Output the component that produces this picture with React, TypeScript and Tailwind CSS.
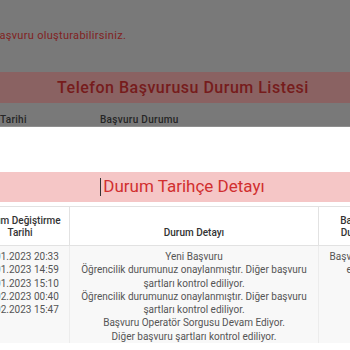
const dates = [
  '20.01.2023 20:33',
  '23.01.2023 14:59',
  '25.01.2023 15:10',
  '01.02.2023 00:40',
  '03.02.2023 15:47',
];

const details = [
  'Yeni Başvuru',
  'Öğrencilik durumunuz onaylanmıştır. Diğer başvuru şartları kontrol ediliyor.',
  'Öğrencilik durumunuz onaylanmıştır. Diğer başvuru şartları kontrol ediliyor.',
  'Başvuru Operatör Sorgusu Devam Ediyor.',
  'Diğer başvuru şartları kontrol ediliyor.',
];

export default function App() {
  return (
    <div className="h-[350px] w-[350px] overflow-hidden bg-white font-['Roboto',sans-serif]">
      {/* page behind the modal, dimmed */}
      <div className="flex h-[127px] flex-col border-b border-[#8e8e8e] bg-[#797979]">
        <p className="-ml-[7px] mt-[29px] whitespace-nowrap text-[11px] leading-[14px] tracking-[0.3px] text-[#822222]">
          başvuru oluşturabilirsiniz.
        </p>
        <div className="mt-[29px] flex h-[31px] items-center justify-center bg-[#8a6262] pl-[16px]">
          <h2 className="whitespace-nowrap text-[16px] font-medium tracking-[0.5px] text-[#761c1c]">
            Telefon Başvurusu Durum Listesi
          </h2>
        </div>
        <div className="mt-[11px] flex whitespace-nowrap text-[10px] font-medium leading-[12px] tracking-[0.3px] text-[#262626]">
          <span className="w-[100px]">Tarihi</span>
          <span>Başvuru Durumu</span>
        </div>
      </div>

      {/* modal */}
      <div className="pt-[45px]">
        <div className="flex h-[30px] items-center justify-center bg-[#f5c6c6] pl-[15px]">
          <span className="mr-[2px] h-[18px] w-px bg-[#333]" />
          <h3 className="whitespace-nowrap text-[17px] text-[#d12f2f]">Durum Tarihçe Detayı</h3>
        </div>

        <div className="-ml-[30px] mt-[4px] w-[440px]">
          <table className="w-full table-fixed border-collapse text-[10px]">
            <colgroup>
              <col className="w-[99px]" />
              <col className="w-[249px]" />
              <col className="w-[80px]" />
              <col />
            </colgroup>
            <thead>
              <tr className="text-[#333]">
                <th className="border border-[#e2e2e2] px-[5px] pb-[6px] pt-[8px] align-bottom font-medium leading-[12px]">
                  Durum Değiştirme Tarihi
                </th>
                <th className="border border-[#e2e2e2] px-[8px] pb-[6px] pt-[8px] align-bottom font-medium leading-[12px]">
                  Durum Detayı
                </th>
                <th className="border border-[#e2e2e2] px-[8px] pb-[6px] pt-[8px] align-bottom font-medium leading-[12px]">
                  Başvuru Durumu
                </th>
                <th className="border border-[#e2e2e2]" />
              </tr>
            </thead>
            <tbody>
              <tr className="bg-[#f8f8f8] text-[#555]">
                <td className="border-x border-[#ececec] px-[5px] pb-0 pt-[4px] text-center align-top leading-[13.3px]">
                  {dates.map((d) => (
                    <div key={d} className="whitespace-nowrap">
                      {d}
                    </div>
                  ))}
                </td>
                <td className="border-x border-[#ececec] px-[8px] pb-0 pt-[4px] text-center align-top leading-[13.3px]">
                  {details.map((d, i) => (
                    <div key={i}>{d}</div>
                  ))}
                </td>
                <td className="border-x border-[#ececec] px-[8px] pb-0 pt-[4px] text-center align-top leading-[13.3px]">
                  Başvuru iptal edildi
                </td>
                <td />
              </tr>
            </tbody>
          </table>
        </div>
      </div>
    </div>
  );
}
